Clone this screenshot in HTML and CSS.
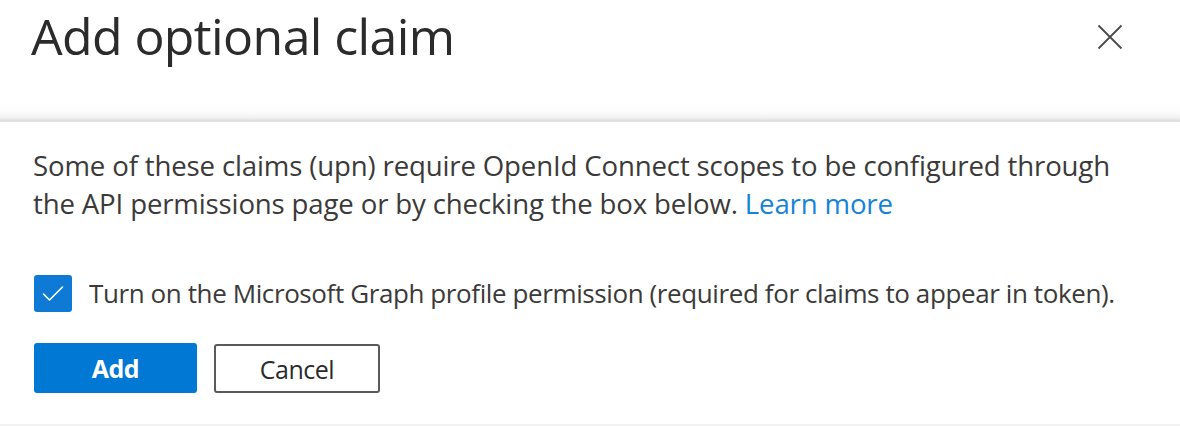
FILE: index.html
```html
<!DOCTYPE html>
<html lang="en">
<head>
<meta charset="utf-8">
<title>Add optional claim</title>
<link rel="stylesheet" href="styles.css">
</head>
<body>
<div class="panel">
  <header class="panel-header">
    <h1 class="panel-title">Add optional claim</h1>
    <button class="close-btn" aria-label="Close">
      <svg width="26" height="26" viewBox="0 0 26 26" aria-hidden="true">
        <path d="M1.5 1.5 L24.5 24.5 M24.5 1.5 L1.5 24.5" stroke="#4a4a4a" stroke-width="1.8" fill="none"/>
      </svg>
    </button>
  </header>
  <div class="divider"></div>
  <main class="panel-body">
    <p class="info">Some of these claims (upn) require OpenId Connect scopes to be configured through the API permissions page or by checking the box below. <a href="#" class="link">Learn more</a></p>
    <label class="check-row">
      <span class="checkbox">
        <svg width="38" height="37" viewBox="0 0 38 37" aria-hidden="true">
          <path d="M9.5 19 L15.5 25 L28.5 12" stroke="#ffffff" stroke-width="1.6" fill="none" stroke-linecap="round" stroke-linejoin="round"/>
        </svg>
      </span>
      <span class="check-label">Turn on the Microsoft Graph profile permission (required for claims to appear in token).</span>
    </label>
    <div class="actions">
      <button class="btn btn-primary">Add</button>
      <button class="btn btn-default">Cancel</button>
    </div>
  </main>
  <div class="bottom-line"></div>
</div>
</body>
</html>
```
FILE: styles.css
```css
* { box-sizing: border-box; }
html, body {
  margin: 0;
  padding: 0;
  background: #ffffff;
}
body {
  font-family: "Open Sans", "Noto Sans", sans-serif;
  color: #323130;
  width: 1180px;
  height: 426px;
  overflow: hidden;
}
.panel {
  display: flex;
  flex-direction: column;
  height: 426px;
}
.panel-header {
  height: 114px;
  display: flex;
  align-items: flex-start;
  justify-content: space-between;
  padding: 0 57px 0 31px;
  background: linear-gradient(to bottom, #ffffff 0, #ffffff 104px, #fafafa 114px);
}
.panel-title {
  margin: 0;
  margin-top: 4px;
  font-size: 50px;
  font-weight: 400;
  line-height: 64px;
  letter-spacing: -0.6px;
  color: #2b2b2b;
}
.close-btn {
  margin-top: 24px;
  padding: 0;
  border: 0;
  background: transparent;
  width: 26px;
  height: 26px;
  display: flex;
}
.divider {
  height: 8px;
  background: linear-gradient(to bottom, #f8f8f8 0, #f1f1f1 4px, #dcdcdc 7px, #e8e8e8 8px);
}
.panel-body {
  flex: 1;
  padding: 24px 0 0 33px;
}
.info {
  margin: 0;
  font-size: 27.6px;
  line-height: 38px;
  letter-spacing: -0.15px;
  color: #3b3a39;
  max-width: 1100px;
}
.link {
  color: #1583d8;
  text-decoration: none;
}
.check-row {
  margin-top: 52px;
  display: flex;
  align-items: center;
  gap: 17px;
  margin-left: 1px;
}
.checkbox {
  width: 38px;
  height: 37px;
  background: #0f7ad6;
  border-radius: 3px;
  display: flex;
  flex: none;
}
.check-label {
  font-size: 26px;
  line-height: 38px;
  letter-spacing: -0.4px;
  color: #3b3a39;
}
.actions {
  margin-top: 31px;
  margin-left: 1px;
  display: flex;
  gap: 17px;
}
.btn {
  font-family: "Open Sans", "Noto Sans", sans-serif;
  font-size: 25px;
  letter-spacing: -0.5px;
  height: 50px;
  border-radius: 3px;
  padding: 0;
  display: flex;
  align-items: center;
  justify-content: center;
}
.btn-primary {
  width: 163px;
  background: #0078d4;
  color: #ffffff;
  border: 0;
  font-weight: 700;
}
.btn-default {
  width: 166px;
  height: 49px;
  margin-top: 1px;
  background: #ffffff;
  color: #2b2b2b;
  border: 2px solid #5a5a5a;
  font-weight: 400;
}
.bottom-line {
  height: 2px;
  background: #f2f2f2;
}
```
